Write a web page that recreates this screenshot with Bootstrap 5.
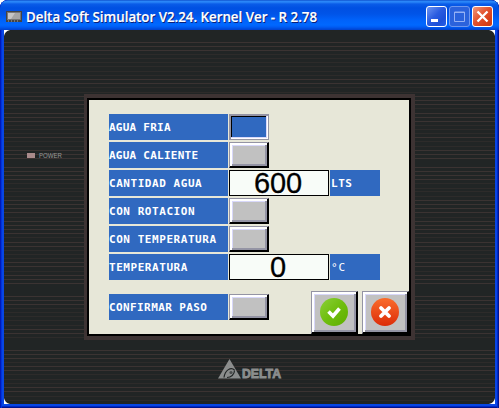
<!DOCTYPE html>
<html lang="es">
<head>
<meta charset="utf-8">
<meta name="viewport" content="width=device-width, initial-scale=1">
<title>Delta Soft Simulator</title>
<link href="https://cdn.jsdelivr.net/npm/bootstrap@5.3.0/dist/css/bootstrap.min.css" rel="stylesheet">
<style>
body{background:#fff;font-family:"Liberation Sans",sans-serif;line-height:1}
.win{width:499px;height:408px;padding:0 4px 4px;border-radius:8px 8px 0 0;background:#0846e4;box-shadow:inset 1px 0 #0019b8,inset 2px 0 #0032dc,inset -1px 0 #00138c,inset -2px 0 #0028c8,inset 0 -1px #00138c,inset 0 -2px #0028c8}
.titlebar{height:30px;margin:0 -4px;padding:3px 6px 0 6px;border-radius:8px 8px 0 0;background:linear-gradient(#0842c0 0,#2a86f8 1px,#2a86f8 2px,#0a5ce8 4px,#0050e2 8px,#0054e8 14px,#0062fa 20px,#0068ff 25px,#005cf4 27px,#0040cc 30px)}
.title{font:600 13.5px/24px "Open Sans",sans-serif;color:#fff;white-space:nowrap;width:292px;margin-left:3px}
.title svg{display:block;overflow:visible}
.tbtn{width:21px;height:21px;border:1px solid #fff;border-radius:3px;padding:0;background:linear-gradient(135deg,#6d95f2,#2a5ce0 45%,#1c4fd8 75%,#2560ea);display:block}
.tbtn svg{display:block}
.tbtns{gap:2px;margin-top:3px}
.tbtn.off{border-color:#6f97ee;background:#2b62dc}
.tbtn.quit{background:linear-gradient(135deg,#f0987c,#e2532f 45%,#d8401a 75%,#c83c14)}
.stage{height:374px;background:#212525}
.stripes{left:0;top:0}
.bezel{width:331px;height:246px;margin:64px 0 0 80px;border:solid #3d3333;border-width:4px 4px 4px 3px}
.lcd{width:324px;height:238px;border:2px solid #000;background:#e7e7d8;padding:14px 0 0 20px}
.line{height:26px;margin-bottom:2px;gap:1px}
.cap{height:26px;width:119px;background:#3069c0;color:#fff;font:700 11px/28px "DejaVu Sans Mono",monospace;letter-spacing:.55px;white-space:pre;flex:none}
.tight{letter-spacing:.25px}
.snug{letter-spacing:.4px}
.unit{width:50px;padding-left:1px}
.unit.thin{font-weight:400;letter-spacing:1px}
.key{width:40px;height:26px;padding:0;border-radius:0;flex:none;border:1px solid;border-color:#9494a4 #000 #000 #9494a4;background:#c1c1c1;box-shadow:inset -1px -1px #000,inset 2px 2px #fff,inset -3px -3px #9494a4,inset 3px 3px #d8d8fa}
.key.on{border-color:#9494a4;background:#3069c0;box-shadow:inset 1px 1px #9494a4,inset -1px -1px #fff,inset -2px -2px #d8d8fa,inset 2px 2px #000}
.num{width:100px;height:26px;border:1px solid #000;background:#f8fcf8;color:#000;font-size:29px;line-height:24px;text-align:center;padding-right:2px;flex:none;-webkit-text-stroke:.3px #000;letter-spacing:-.2px}
.confirm{padding-top:12px}
.big{width:47px;height:43px}
.big svg{display:block;margin:-2px 0 0 8px}
.keys{margin:-3px 0 0 42px;gap:4px}
.lamp{left:23px;top:121px}
.lamp i{width:8px;height:5px;background:#a98a8b;display:block}
.lamp svg{display:block;margin-left:4px;overflow:visible}
.logo{left:213px;top:328px}
</style>
</head>
<body>
<main class="win overflow-hidden">
  <header class="titlebar d-flex align-items-start">
    <svg class="mt-2 flex-shrink-0" width="17" height="12" viewBox="0 0 17 12"><path d="M0 0h16v11H0z" fill="#444"/><path d="M1 1h14v8H1z" fill="#777"/><path d="M2 2h12v6H2z" fill="#a5a5a5"/><path d="M2 2h7L5 8H2z" fill="#c5c5c5"/><path d="M2 10h1m2 0h1m2 0h1m2 0h1" stroke="#aaa"/></svg>
    <div class="title"><svg width="296" height="27"><text x="1" y="20" fill="#0a2078" textLength="291" lengthAdjust="spacingAndGlyphs">Delta Soft Simulator V2.24. Kernel Ver - R 2.78</text><text x="0" y="19" fill="#fff" stroke="#fff" stroke-width=".2" textLength="291" lengthAdjust="spacingAndGlyphs">Delta Soft Simulator V2.24. Kernel Ver - R 2.78</text></svg></div>
    <div class="tbtns d-flex ms-auto">
      <button class="tbtn" aria-label="Minimizar"><svg width="19" height="19"><path d="M4 12h7v3H4z" fill="#fff"/></svg></button>
      <button class="tbtn off" aria-label="Maximizar"><svg width="19" height="19"><path d="M4.500 5h10v9.500h-10zM4 5.500h11" fill="none" stroke="#94b0f4"/></svg></button>
      <button class="tbtn quit" aria-label="Cerrar"><svg width="19" height="19"><path d="M4.500 4.500l10 10m0-10l-10 10" stroke="#fff" stroke-width="2.300"/></svg></button>
    </div>
  </header>
  <section class="stage position-relative overflow-hidden">
    <svg id="stripes" class="stripes position-absolute" width="491" height="374" viewBox="4 30 491 374" shape-rendering="crispEdges"></svg>
    <div class="d-flex position-relative">
      <div class="bezel">
        <div class="lcd">
          <div class="line d-flex"><div class="cap tight">AGUA FRIA</div><button class="key on" aria-label="Agua fria"></button></div>
          <div class="line d-flex"><div class="cap tight">AGUA CALIENTE</div><button class="key" aria-label="Agua caliente"></button></div>
          <div class="line d-flex"><div class="cap">CANTIDAD AGUA</div><div class="num">600</div><div class="cap unit">LTS</div></div>
          <div class="line d-flex"><div class="cap">CON ROTACION</div><button class="key" aria-label="Con rotacion"></button></div>
          <div class="line d-flex"><div class="cap">CON TEMPERATURA</div><button class="key" aria-label="Con temperatura"></button></div>
          <div class="line d-flex"><div class="cap">TEMPERATURA</div><div class="num">0</div><div class="cap unit thin">°C</div></div>
          <div class="confirm d-flex align-items-start">
            <div class="line d-flex"><div class="cap snug">CONFIRMAR PASO</div><button class="key" aria-label="Confirmar paso"></button></div>
            <div class="keys d-flex">
              <button class="key big" aria-label="Aceptar"><svg width="30" height="30"><defs><linearGradient id="g" x2="1" y2="1"><stop stop-color="#8bd039"/><stop offset=".5" stop-color="#6fbe0e"/><stop offset="1" stop-color="#5fae00"/></linearGradient></defs><circle cx="14" cy="15" r="14" fill="url(#g)"/><path d="M8.500 14.500l4.500 4.500 6.500-7.500" fill="none" stroke="#fff" stroke-width="3.600"/></svg></button>
              <button class="key big" aria-label="Cancelar"><svg width="30" height="30"><defs><linearGradient id="r" x2="0" y2="1"><stop stop-color="#fa6c2c"/><stop offset="1" stop-color="#dc2c08"/></linearGradient></defs><circle cx="14" cy="15" r="14" fill="url(#r)"/><path d="M10 11l8 8m0-8l-8 8" stroke="#fff" stroke-width="3.800" stroke-linecap="round"/></svg></button>
            </div>
          </div>
        </div>
      </div>
    </div>
    <div class="lamp position-absolute d-flex align-items-center"><i></i><svg width="26" height="8"><text x="0" y="6.500" font-size="7" fill="#969898" textLength="23" lengthAdjust="spacingAndGlyphs">POWER</text></svg></div>
    <svg class="logo position-absolute" width="72" height="26" fill="#8b8d8d"><path d="M12.500 1L24 20.500H1z"/><path d="M7 19.500C8 12 14 8.500 17.500 12M10 19.500c4 0 7.500-3 7.500-7" fill="none" stroke="#212525" stroke-width="1.200"/><circle cx="14" cy="14.500" r="1.600" fill="#4a4d4d"/><text x="25" y="20" font-size="13" font-weight="700" textLength="39" lengthAdjust="spacingAndGlyphs" stroke="#8b8d8d" stroke-width=".9">DELTA</text></svg>
    <svg class="position-absolute top-0 start-0 w-100 h-100 pe-none" viewBox="0 0 491 374" fill="#fff"><path d="M0 0h6Q1 1 0 6zM491 0h-6q5 1 6 6zM0 374h6q-5-1-6-6zM491 374h-6q5-1 6-6z"/></svg>
  </section>
</main>
<script src="https://cdn.jsdelivr.net/npm/bootstrap@5.3.0/dist/js/bootstrap.bundle.min.js"></script>
<script>
// Brushed-panel stripes: vertical positions grouped by colour
const stripes = {
  '#3b3332': [42,46,50,79,83,96,100,104,113,117,121,137,150,154,158,167,171,175,179,200,204,208,212,221,225,229,233,242,246,262,266,275,279,283,296,300,304,329,333,350,354,358,366,370,387,391],
  '#2d2b2a': [54,58,62,66,71,75,87,92,108,125,129,133,141,146,183,188,191,196,217,237,250,254,258,271,308,312,316,320,325,337,362,374,379,383,396,400]
};
document.getElementById('stripes').innerHTML = Object.entries(stripes).map(([c, ys]) =>
  `<path stroke="${c}" d="${ys.map(y => `M4 ${y + .5}h491`).join('')}"/>`).join('');
</script>
</body>
</html>
